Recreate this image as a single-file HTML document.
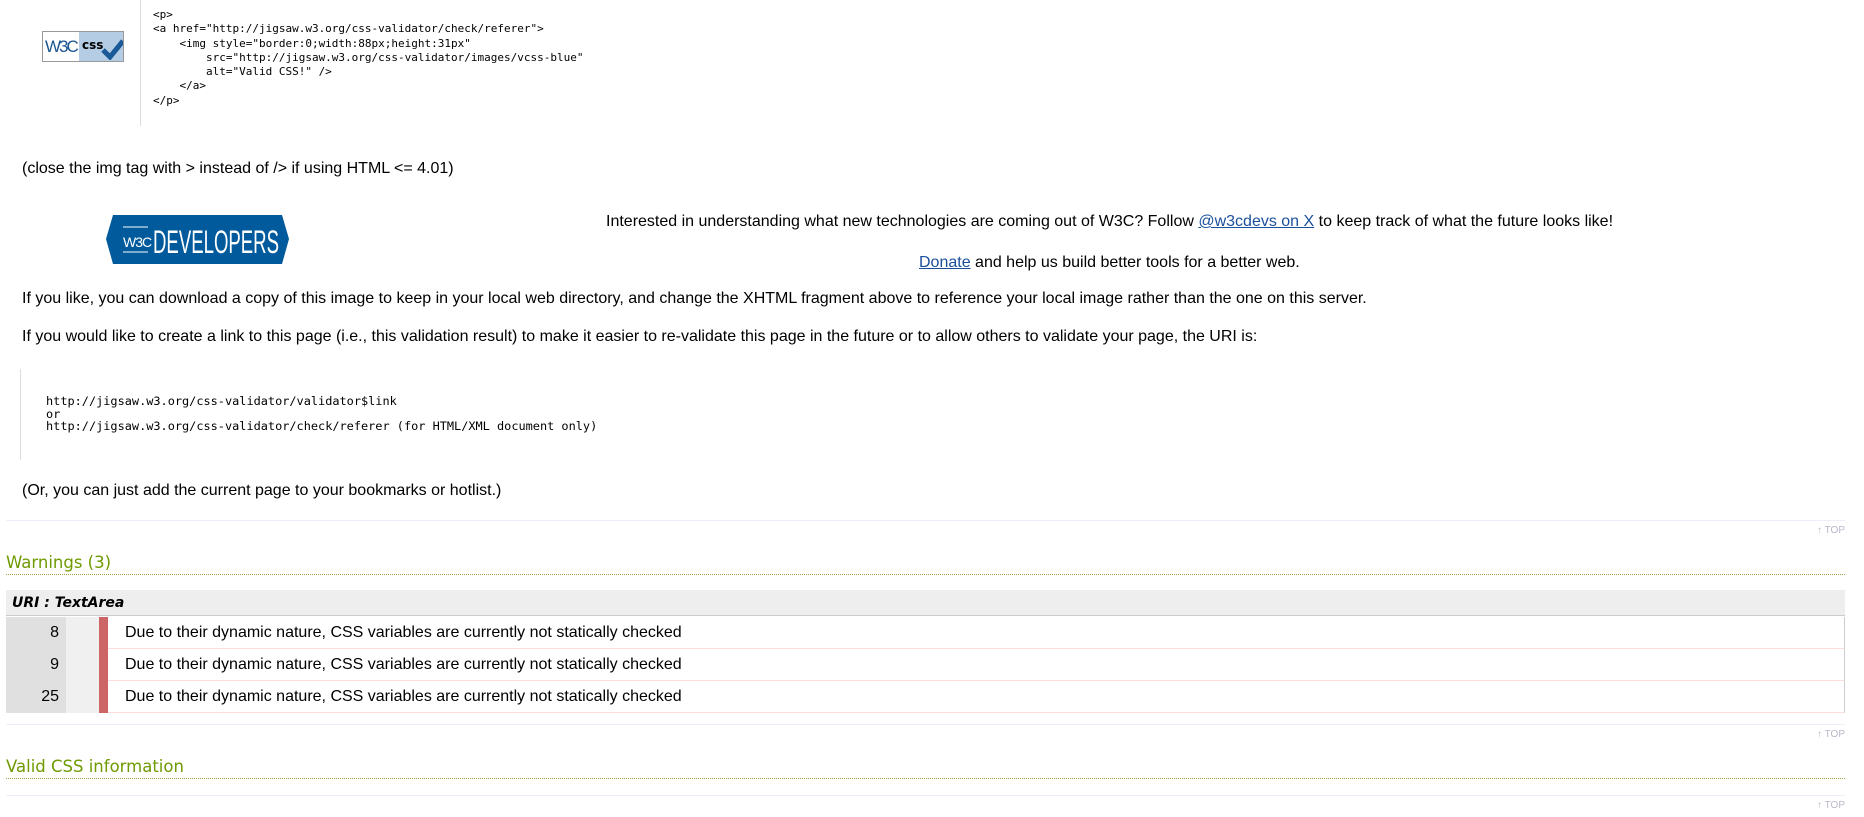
<!DOCTYPE html>
<html><head><meta charset="utf-8"><style>
body{margin:0;width:1864px;height:817px;background:#fff;position:relative;overflow:hidden;font-family:"Liberation Sans",Arial,sans-serif;color:#000}
.a{position:absolute}
.t{font-size:16px;white-space:nowrap}
pre{margin:0;font-family:"DejaVu Sans Mono","Liberation Mono",monospace;font-size:11px;line-height:14.3px}
.hr{position:absolute;left:6px;width:1839px;height:1px;background:#eeeef8}
.top{position:absolute;right:19px;font-size:10px;color:#b8b8c8}
h2{position:absolute;margin:0;left:6px;width:1839px;font-family:"DejaVu Sans",Verdana,sans-serif;font-weight:normal;font-size:16.5px;color:#6f9a00;border-bottom:1px dotted #a0a040;line-height:20px;padding-bottom:1px}
.row{position:absolute;left:6px;width:1838px;height:31px;border-bottom:1px solid #fdd;border-right:1px solid #ccc}
.n{position:absolute;left:0;width:60px;height:32px;background:#e0e0e0;text-align:right;font-size:16px;line-height:32px}
.n span{padding-right:7px}
.g{position:absolute;left:60px;width:33px;height:32px;background:#f0f0f0}
.r{position:absolute;left:93px;width:9px;height:32px;background:#cc6666}
.m{position:absolute;left:119px;font-size:16px;line-height:32px;white-space:nowrap}
a{color:#1a4f9c}
</style></head><body>
<div class="a" style="left:42px;top:31px;width:82px;height:31px;border:1px solid #999;box-sizing:border-box;background:#b4cce4;overflow:hidden">
 <div class="a" style="left:0;top:0;width:36px;height:29px;background:#fff"></div>
 <div class="a" style="left:2px;top:5px;font-size:17px;letter-spacing:-2px;color:#1a5590;font-family:'Liberation Sans'">W3C</div>
 <div class="a" style="left:39px;top:6px;font-size:12px;font-weight:bold;font-family:'DejaVu Sans'">css</div>
 <svg class="a" style="left:58px;top:6px" width="24" height="22"><path d="M2 12 L9 19 L22 3" stroke="#1a5a98" stroke-width="5" fill="none"/></svg>
</div>
<div class="a" style="left:140px;top:0;width:1px;height:126px;background:#ddd"></div>
<pre class="a" style="left:153px;top:8px">&lt;p&gt;
&lt;a href="http://jigsaw.w3.org/css-validator/check/referer"&gt;
    &lt;img style="border:0;width:88px;height:31px"
        src="http://jigsaw.w3.org/css-validator/images/vcss-blue"
        alt="Valid CSS!" /&gt;
    &lt;/a&gt;
&lt;/p&gt;</pre>
<div class="a t" style="left:22px;top:160px">(close the img tag with &gt; instead of /&gt; if using HTML &lt;= 4.01)</div>
<svg class="a" style="left:106px;top:215px" width="183" height="49">
 <polygon points="7,0 176,0 183,24 176,49 7,49 0,24" fill="#005a9c"/>
 <line x1="17" y1="12" x2="42" y2="12" stroke="#fff" stroke-width="1"/>
 <line x1="17" y1="37" x2="42" y2="37" stroke="#fff" stroke-width="1"/>
 <text x="17" y="32" fill="#fff" font-family="Liberation Sans" font-size="14" letter-spacing="-1">W3C</text>
 <text x="47" y="38" fill="#fff" font-family="Liberation Sans Narrow,Liberation Sans" font-size="32" textLength="126" lengthAdjust="spacingAndGlyphs">DEVELOPERS</text>
</svg>
<div class="a t" style="left:606px;top:213px">Interested in understanding what new technologies are coming out of W3C? Follow <a href="#">@w3cdevs on X</a> to keep track of what the future looks like!</div>
<div class="a t" style="left:919px;top:254px"><a href="#">Donate</a> and help us build better tools for a better web.</div>
<div class="a t" style="left:22px;top:290px">If you like, you can download a copy of this image to keep in your local web directory, and change the XHTML fragment above to reference your local image rather than the one on this server.</div>
<div class="a t" style="left:22px;top:328px">If you would like to create a link to this page (i.e., this validation result) to make it easier to re-validate this page in the future or to allow others to validate your page, the URI is:</div>
<div class="a" style="left:20px;top:369px;width:1px;height:91px;background:#ddd"></div>
<pre class="a" style="left:46px;top:395px;line-height:12.5px;font-size:11.9px">http://jigsaw.w3.org/css-validator/validator$link
or
http://jigsaw.w3.org/css-validator/check/referer (for HTML/XML document only)</pre>
<div class="a t" style="left:22px;top:482px">(Or, you can just add the current page to your bookmarks or hotlist.)</div>
<div class="hr" style="top:520px"></div>
<div class="top" style="top:525px">↑ TOP</div>
<h2 style="top:553px">Warnings (3)</h2>
<div class="a" style="left:6px;top:590px;width:1839px;height:26px;background:#eee;border-bottom:1px solid #ccc;box-sizing:border-box"></div>
<div class="a" style="left:12px;top:595px;font-family:'DejaVu Sans',Verdana,sans-serif;font-weight:bold;font-style:italic;font-size:14px">URI : TextArea</div>
<div class="row" style="top:617px"><div class="n"><span>8</span></div><div class="g"></div><div class="r"></div><div class="m">Due to their dynamic nature, CSS variables are currently not statically checked</div></div>
<div class="row" style="top:649px"><div class="n"><span>9</span></div><div class="g"></div><div class="r"></div><div class="m">Due to their dynamic nature, CSS variables are currently not statically checked</div></div>
<div class="row" style="top:681px"><div class="n"><span>25</span></div><div class="g"></div><div class="r"></div><div class="m">Due to their dynamic nature, CSS variables are currently not statically checked</div></div>
<div class="hr" style="top:724px"></div>
<div class="top" style="top:729px">↑ TOP</div>
<h2 style="top:757px">Valid CSS information</h2>
<div class="hr" style="top:795px"></div>
<div class="top" style="top:800px">↑ TOP</div>
</body></html>
